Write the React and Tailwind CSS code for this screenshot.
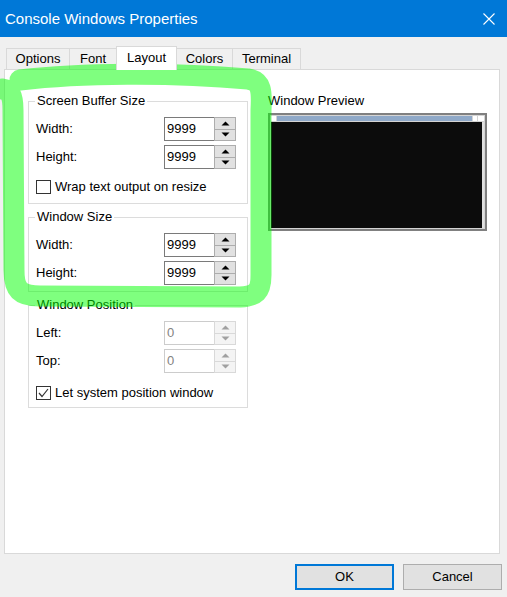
import React from "react";

const Arrow = ({ up, color }) => (
  <svg width="9" height="5" viewBox="0 0 9 5">
    {up ? <polygon points="0.5,4.5 8.5,4.5 4.5,0.5" fill={color} /> : <polygon points="0.5,0.5 8.5,0.5 4.5,4.5" fill={color} />}
  </svg>
);

const Spin = ({ value, disabled }) => (
  <div className="flex h-[24px] w-[72px]">
    <div
      className={
        disabled
          ? "flex-1 border border-r-0 border-[#cccccc] bg-white pl-[2px] leading-[22px] text-[#838383]"
          : "flex-1 border border-r-0 border-[#7a7a7a] bg-white pl-[2px] leading-[22px] text-black"
      }
    >
      {value}
    </div>
    <div
      className={
        disabled
          ? "flex w-[22px] flex-col border border-[#d9d9d9] bg-[#f4f4f4]"
          : "flex w-[22px] flex-col border border-[#adadad] bg-[#e1e1e1]"
      }
    >
      <div
        className={
          disabled
            ? "flex flex-1 items-center justify-center border-b border-[#d9d9d9]"
            : "flex flex-1 items-center justify-center border-b border-[#adadad]"
        }
      >
        <Arrow up color={disabled ? "#a0a0a0" : "#000000"} />
      </div>
      <div className="flex flex-1 items-center justify-center">
        <Arrow color={disabled ? "#a0a0a0" : "#000000"} />
      </div>
    </div>
  </div>
);

const Row = ({ label, value, disabled }) => (
  <div className="flex h-[24px] items-center justify-between">
    <span>{label}</span>
    <Spin value={value} disabled={disabled} />
  </div>
);

const Check = ({ checked, label }) => (
  <div className="flex h-[14px] items-center gap-[4px]">
    <div className="flex h-[14px] w-[15px] items-center justify-center border border-[#333333] bg-white">
      {checked && (
        <svg width="11" height="10" viewBox="0 0 11 10">
          <polyline points="1,5 4,8.5 10,1" fill="none" stroke="#333333" strokeWidth="1.2" />
        </svg>
      )}
    </div>
    <span className="leading-[16px]">{label}</span>
  </div>
);

const Group = ({ title, height, className, children }) => (
  <div className={`relative w-[220px] border border-[#dcdcdc] ${className}`} style={{ height }}>
    <span className="absolute left-[6px] top-[-9px] bg-white px-[2px] leading-[16px]">{title}</span>
    <div className="flex flex-col gap-[4px] pl-[7px] pr-[11px] pt-[15px]">{children}</div>
  </div>
);

const tabs = [
  { name: "Options", w: "w-[63px]" },
  { name: "Font", w: "w-[47px]" },
  { name: "Layout", w: "w-[61px]", active: true },
  { name: "Colors", w: "w-[55px]" },
  { name: "Terminal", w: "w-[69px]" },
];

export default function App() {
  return (
    <div className="relative h-[597px] w-[507px] overflow-hidden bg-[#f0f0f0] font-['Liberation_Sans',Arial,sans-serif] text-[13px] text-black">
      {/* title bar */}
      <div className="flex h-[37px] items-center justify-between bg-[#0078d7] pl-[5px] pr-[12px] text-white">
        <span className="text-[15px] leading-[20px]">Console Windows Properties</span>
        <svg width="12" height="12" viewBox="0 0 12 12">
          <path d="M0.5 0.5 L11.5 11.5 M11.5 0.5 L0.5 11.5" stroke="#ffffff" strokeWidth="1.1" />
        </svg>
      </div>

      <div className="pl-[4px] pr-[7px] pt-[9px]">
        {/* tabs */}
        <div className="flex h-[24px] items-end pl-[2px]">
          {tabs.map((t, i) =>
            t.active ? (
              <div
                key={t.name}
                className={`relative z-10 h-[24px] ${t.w} border border-b-0 border-[#d9d9d9] bg-white pt-[3px] text-center leading-[16px]`}
              >
                {t.name}
              </div>
            ) : (
              <div
                key={t.name}
                className={`mb-[1px] h-[21px] ${t.w} border-t border-[#d9d9d9] bg-[#f0f0f0] pt-[2px] text-center leading-[16px] ${
                  i === 3 ? "" : "border-l"
                } ${i === tabs.length - 1 ? "border-r" : ""}`}
              >
                {t.name}
              </div>
            )
          )}
        </div>

        {/* panel */}
        <div className="-mt-[1px] flex h-[485px] border border-[#d9d9d9] bg-white">
          <div className="flex flex-col pl-[23px] pt-[31px]">
            <Group title="Screen Buffer Size" height="103px">
              <Row label="Width:" value="9999" />
              <Row label="Height:" value="9999" />
              <div className="mt-[7px]">
                <Check label="Wrap text output on resize" />
              </div>
            </Group>
            <Group title="Window Size" height="75px" className="mt-[13px]">
              <Row label="Width:" value="9999" />
              <Row label="Height:" value="9999" />
            </Group>
            <Group title="Window Position" height="103px" className="mt-[13px]">
              <Row label="Left:" value="0" disabled />
              <Row label="Top:" value="0" disabled />
              <div className="mt-[9px]">
                <Check checked label="Let system position window" />
              </div>
            </Group>
          </div>

          <div className="ml-[20px] flex flex-col pt-[23px]">
            <span className="leading-[16px]">Window Preview</span>
            <div className="mt-[4px] flex h-[118px] w-[219px] flex-col border-2 border-[#808080] bg-[#d4d4d4] p-[1px]">
              <div className="flex h-[5px] gap-[1px]">
                <div className="w-[5px] bg-white" />
                <div className="flex-1 bg-[#8fa9c8]" />
                <div className="w-[4px] bg-white" />
                <div className="w-[6px] bg-white" />
              </div>
              <div className="mt-[1px] flex flex-1">
                <div className="flex-1 bg-[#0c0c0c]" />
                <div className="w-[2px] bg-[#e0e0e0]" />
              </div>
            </div>
          </div>
        </div>
      </div>

      {/* buttons */}
      <div className="mt-[10px] flex justify-end gap-[9px] pr-[5px]">
        <button className="h-[26px] w-[99px] border-2 border-[#0078d7] bg-[#e1e1e1] leading-[20px]">OK</button>
        <button className="h-[26px] w-[99px] border border-[#adadad] bg-[#e1e1e1] leading-[22px]">Cancel</button>
      </div>

      {/* hand-drawn highlight */}
      <svg className="pointer-events-none absolute left-0 top-0" width="507" height="597" viewBox="0 0 507 597">
        <path
          d="M 20 80 C 80 73, 170 72, 248 79 C 262 81, 262 92, 261 110 L 261 275 C 261 292, 256 296, 240 297 L 40 296 C 20 296, 14 290, 14 270 L 13 110 C 13 95, 10 90, 2 89"
          fill="none"
          stroke="#00ff00"
          strokeOpacity="0.5"
          strokeWidth="21"
          strokeLinecap="round"
          strokeLinejoin="round"
        />
      </svg>
    </div>
  );
}
